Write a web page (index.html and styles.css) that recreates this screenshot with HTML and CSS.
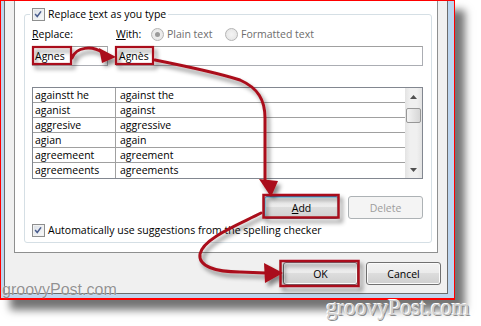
FILE: index.html
```html
<!DOCTYPE html>
<html>
<head>
<meta charset="utf-8">
<link rel="stylesheet" href="styles.css">
</head>
<body>
<div class="screen">
  <div class="frame">
    <div class="chrome">
      <div class="dialog">
        <div class="panel">
          <div class="group">
            <div class="legend">
              <span class="check"><svg viewBox="0 0 13 13" width="11" height="11"><path d="M2.5 6 L5 8.8 L9.5 2.8" stroke="#4a5d8e" stroke-width="1.8" fill="none"/></svg></span>
              <span>Replace <u>t</u>ext as you type</span>
            </div>
            <div class="fields">
              <div class="lbl"><u>R</u>eplace:</div>
              <div class="lbl withrow">
                <span class="with"><u>W</u>ith:</span>
                <span class="radio on"></span><span class="dis plain">Plain text</span>
                <span class="radio"></span><span class="dis">Formatted text</span>
              </div>
              <div class="input">Agnes</div>
              <div class="input">Agnès</div>
            </div>
            <div class="list">
              <div class="rows">
                <div class="row"><span class="c1">againstt he</span><span class="c2">against the</span></div>
                <div class="row"><span class="c1">aganist</span><span class="c2">against</span></div>
                <div class="row"><span class="c1">aggresive</span><span class="c2">aggressive</span></div>
                <div class="row"><span class="c1">agian</span><span class="c2">again</span></div>
                <div class="row"><span class="c1">agreemeent</span><span class="c2">agreement</span></div>
                <div class="row"><span class="c1">agreemeents</span><span class="c2">agreements</span></div>
              </div>
              <div class="scroll">
                <div class="sbtn"><svg width="7" height="4"><path d="M0 4 L3.5 0 L7 4z" fill="#505050"/></svg></div>
                <div class="thumb"></div>
                <div class="track"></div>
                <div class="sbtn"><svg width="7" height="4"><path d="M0 0 L3.5 4 L7 0z" fill="#505050"/></svg></div>
              </div>
            </div>
            <div class="btnrow">
              <button class="btn default"><u>A</u>dd</button>
              <button class="btn disabled">Delete</button>
            </div>
            <div class="auto">
              <span class="check"><svg viewBox="0 0 13 13" width="11" height="11"><path d="M2.5 6 L5 8.8 L9.5 2.8" stroke="#4a5d8e" stroke-width="1.8" fill="none"/></svg></span>
              <span>Automatically use suggestions from the spelling checker</span>
            </div>
          </div>
        </div>
        <div class="footer">
          <button class="btn">OK</button>
          <button class="btn">Cancel</button>
        </div>
      </div>
    </div>
  </div>
  <div class="wm wm-left">groovyPost.com</div>
  <div class="wm wm-right">groovyPost.com</div>
  <svg class="notes" width="481" height="326" viewBox="0 0 481 326">
    <defs>
      <filter id="sh" x="-30%" y="-30%" width="160%" height="160%">
        <feDropShadow dx="3" dy="4" stdDeviation="2" flood-color="#000" flood-opacity="0.45"/>
      </filter>
    </defs>
    <g filter="url(#sh)" stroke="#aa0f1a" fill="none" stroke-width="2.2">
      <rect x="33" y="47" width="38" height="17"/>
      <rect x="116" y="47" width="37" height="17"/>
      <rect x="263.5" y="195" width="75" height="22.5" stroke-width="2.5"/>
      <rect x="280.5" y="261" width="78" height="25" stroke-width="2.5"/>
      <path d="M72 58 C76 47 92 45 103 53" stroke-width="3" stroke-linecap="round"/>
      <path d="M155 60 C185 66 215 72 240 80 C258 88 265 100 265 118 L265 180" stroke-width="3" stroke-linecap="round"/>
      <path d="M261 213 C240 224 203 238 200 254 C198 266 215 272 240 272 L266 273" stroke-width="3" stroke-linecap="round"/>
      <polygon points="99,48 116,57 102,63" fill="#aa0f1a" stroke="none"/>
      <polygon points="259,179 278,181 271,197" fill="#aa0f1a" stroke="none"/>
      <polygon points="264,263 283,273 265,283" fill="#aa0f1a" stroke="none"/>
    </g>
  </svg>
</div>
</body>
</html>
```

FILE: styles.css
```css
* { box-sizing: border-box; }
html, body { margin: 0; padding: 0; background: #fff; }
body {
  font-family: "Open Sans", "Segoe UI", sans-serif;
  font-size: 10.5px;
  color: #000;
}
.screen {
  position: relative;
  width: 481px;
  height: 326px;
  overflow: hidden;
  background: #fff;
}
.frame {
  width: 455px;
  height: 300px;
  border: 1px solid #ff0000;
  border-bottom-width: 2px;
  box-shadow: 10px 10px 8px rgba(0, 0, 0, 0.55);
}
.chrome {
  height: 100%;
  background: #bdd5ee;
  padding: 0 6px 4px 3px;
}
.dialog {
  height: 100%;
  background: #f0f0f0;
  border: 1px solid #6b6b6b;
  border-top: 0;
  padding: 0 9px;
  display: flex;
  flex-direction: column;
}
.panel {
  background: #fff;
  border: 1px solid #8e8f8f;
  border-top: 0;
  padding: 0 5px 9px 9px;
}
.group {
  margin-top: 13px;
  border: 1px solid #d5dfe5;
  border-radius: 3px;
  padding: 0 8px 5px 7px;
}
.legend {
  display: flex;
  align-items: center;
  gap: 3px;
  width: fit-content;
  height: 13px;
  margin: -7px 0 0 -2px;
  padding: 0 2px;
  background: #fff;
  line-height: 13px;
}
.check {
  width: 13px;
  height: 13px;
  border: 1px solid #8e8f8f;
  background: linear-gradient(135deg, #dadfe6, #fbfbfb);
  box-shadow: inset 0 0 0 1px #f2f2f2;
  display: flex;
  align-items: center;
  justify-content: center;
  flex: none;
}
.fields {
  margin-top: 6px;
  display: grid;
  grid-template-columns: 76px 1fr;
  column-gap: 8px;
  row-gap: 5px;
}
.lbl {
  height: 14px;
  line-height: 14px;
}
.withrow {
  display: flex;
  align-items: center;
}
.with { width: 35px; flex: none; }
.radio {
  width: 13px;
  height: 13px;
  border-radius: 50%;
  border: 1px solid #b4b4b4;
  background: radial-gradient(circle at 50% 50%, #f4f4f4 0, #e2e2e2 100%);
  flex: none;
  margin-right: 3px;
  position: relative;
}
.radio.on::after {
  content: "";
  position: absolute;
  left: 3px;
  top: 3px;
  width: 5px;
  height: 5px;
  border-radius: 50%;
  background: #9a9a9a;
}
.dis { color: #6d6d6d; }
.plain { width: 58px; flex: none; }
.input {
  height: 20px;
  border: 1px solid #abadb3;
  border-top-color: #a0a0a0;
  padding-left: 2px;
  line-height: 18px;
}
.list {
  margin-top: 21px;
  height: 92px;
  border: 1px solid #828790;
  display: flex;
}
.rows { flex: 1; }
.row {
  display: flex;
  height: 15px;
  border-bottom: 1px solid #a0a0a0;
  line-height: 14px;
}
.row:last-child { border-bottom: 0; }
.c1 {
  width: 83px;
  flex: none;
  border-right: 1px solid #a0a0a0;
  padding-left: 2px;
}
.c2 { padding-left: 4px; }
.scroll {
  width: 17px;
  display: flex;
  flex-direction: column;
  background: linear-gradient(to right, #e3e3e3, #f0f0f0 30%, #f0f0f0 70%, #e3e3e3);
}
.sbtn {
  height: 17px;
  display: flex;
  align-items: center;
  justify-content: center;
}
.thumb {
  margin: 3px 1px 0 1px;
  height: 15px;
  border: 1px solid #979797;
  border-radius: 2px;
  background: linear-gradient(to right, #f4f4f4, #e5e5e5 50%, #d6d6d6);
}
.track { flex: 1; }
.btnrow {
  margin-top: 17px;
  display: flex;
  justify-content: flex-end;
  gap: 9px;
}
.btn {
  width: 75px;
  height: 23px;
  padding: 0;
  margin: 0;
  font: inherit;
  color: #000;
  border: 1px solid #707070;
  border-radius: 3px;
  background: linear-gradient(#f2f2f2 0%, #ebebeb 49%, #dddddd 50%, #cfcfcf 100%);
  box-shadow: inset 0 0 0 1px #fbfbfb;
  line-height: 20px;
}
.btn.default {
  border-color: #3c7fb1;
  box-shadow: inset 0 0 0 1px #9ee2f8;
}
.btn.disabled {
  border-color: #adb2b5;
  background: #f4f4f4;
  color: #9d9d9d;
  box-shadow: none;
}
.auto {
  margin-top: 5px;
  height: 13px;
  display: flex;
  align-items: center;
  gap: 3px;
  line-height: 13px;
}
.footer {
  margin-top: 9px;
  margin-right: -3px;
  display: flex;
  justify-content: flex-end;
  gap: 8px;
}
.wm {
  position: absolute;
  white-space: nowrap;
}
.wm-left {
  left: 2px;
  top: 281px;
  font-family: "Liberation Sans", sans-serif;
  font-size: 16px;
  color: rgba(110, 110, 110, 0.75);
  text-shadow: 0 0 1px #fff;
}
.wm-right {
  left: 326px;
  top: 295px;
  font-family: "Liberation Serif", serif;
  font-size: 23px;
  letter-spacing: -0.5px;
  color: #cfcfcf;
  text-shadow: -1px -1px 0 #ffffff, 1px 1px 0 #8a8a8a;
}
.notes {
  position: absolute;
  left: 0;
  top: 0;
  pointer-events: none;
}
```
